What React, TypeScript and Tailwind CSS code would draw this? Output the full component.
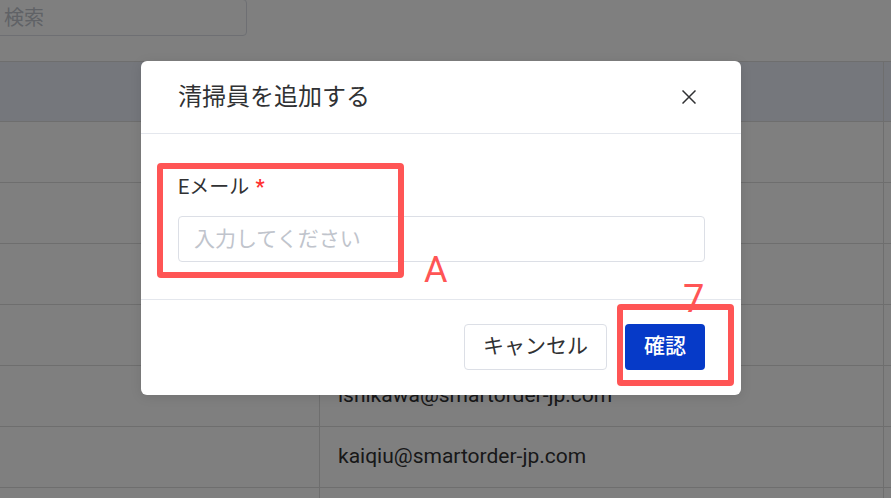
const rows = ['', '', '', '', 'ishikawa@smartorder-jp.com', 'kaiqiu@smartorder-jp.com', ''];

function StaffTable() {
  return (
    <div>
      {/* Search bar */}
      <div className="h-[62px]">
        <div className="-ml-[14px] -mt-px flex h-[37px] w-[261px] items-center rounded-[4px] border border-[#dcdfe6] pl-[17px] text-[20px] text-[#c0c4cc]">
          検索
        </div>
      </div>

      {/* Table */}
      <div className="grid h-[61px] grid-cols-[320px_564px_1fr] border-y border-[#dcdcdc] bg-[#eaeef8]">
        <div className="border-r border-[#dcdcdc]" />
        <div className="border-r border-[#dcdcdc]" />
        <div />
      </div>
      {rows.map((email, i) => (
        <div key={i} className="grid h-[61px] grid-cols-[320px_564px_1fr] border-b border-[#dcdcdc]">
          <div className="border-r border-[#dcdcdc]" />
          <div className="flex items-center border-r border-[#dcdcdc] pl-[18px] text-[21px] text-[#303133]">
            {email}
          </div>
          <div />
        </div>
      ))}
    </div>
  );
}

function CloseIcon() {
  return (
    <svg width="14" height="14" viewBox="0 0 14 14" className="text-[#303133]">
      <path d="M0.5 0.5L13.5 13.5M13.5 0.5L0.5 13.5" stroke="currentColor" strokeWidth="1.5" />
    </svg>
  );
}

function AddStaffDialog() {
  return (
    <div className="absolute left-[141px] top-[61px] w-[600px] rounded-[6px] bg-white shadow-[0_2px_12px_rgba(0,0,0,0.1)]">
      <div className="flex h-[73px] items-center justify-between border-b border-[#e4e7ed] pl-[37px] pr-[45px]">
        <span className="text-[24px] text-[#303133]">清掃員を追加する</span>
        <CloseIcon />
      </div>

      <div className="pb-[37px] pl-[37px] pr-[36px] pt-[41px]">
        <label className="block text-[20px] leading-[24px] text-[#303133]">
          Eメール<span className="ml-[6px] font-bold text-[#ff3030]">*</span>
        </label>
        <input
          placeholder="入力してください"
          className="mt-[17px] block h-[46px] w-full rounded-[4px] border border-[#dcdfe6] px-[15px] text-[21px] text-[#303133] outline-none placeholder:text-[#c0c4cc]"
        />
      </div>

      <div className="flex justify-end gap-[18px] border-t border-[#e4e7ed] pb-[25px] pr-[36px] pt-[24px]">
        <button className="h-[46px] w-[143px] rounded-[4px] border border-[#dcdfe6] bg-white text-[21px] text-[#303133]">
          キャンセル
        </button>
        <button className="h-[46px] w-[80px] rounded-[4px] bg-[#063ac8] text-[21px] font-medium text-white">
          確認
        </button>
      </div>
    </div>
  );
}

export default function App() {
  return (
    <div className="relative h-[498px] w-[891px] overflow-hidden bg-white font-[Roboto,'Noto_Sans_CJK_JP',sans-serif]">
      <StaffTable />

      <div className="absolute inset-0 bg-black/50" />
      <AddStaffDialog />

      {/* Callouts */}
      <div className="absolute left-[157px] top-[163px] h-[115px] w-[247px] rounded-[4px] border-[6px] border-[#ff5555]" />
      <div className="absolute left-[424px] top-[252px] text-[36px] leading-none text-[#ff5555]">A</div>
      <div className="absolute left-[617px] top-[304px] h-[82px] w-[117px] rounded-[4px] border-[6px] border-[#ff5555]" />
      <div className="absolute left-[683px] top-[280px] text-[38px] leading-none text-[#ff5555]">7</div>
    </div>
  );
}
